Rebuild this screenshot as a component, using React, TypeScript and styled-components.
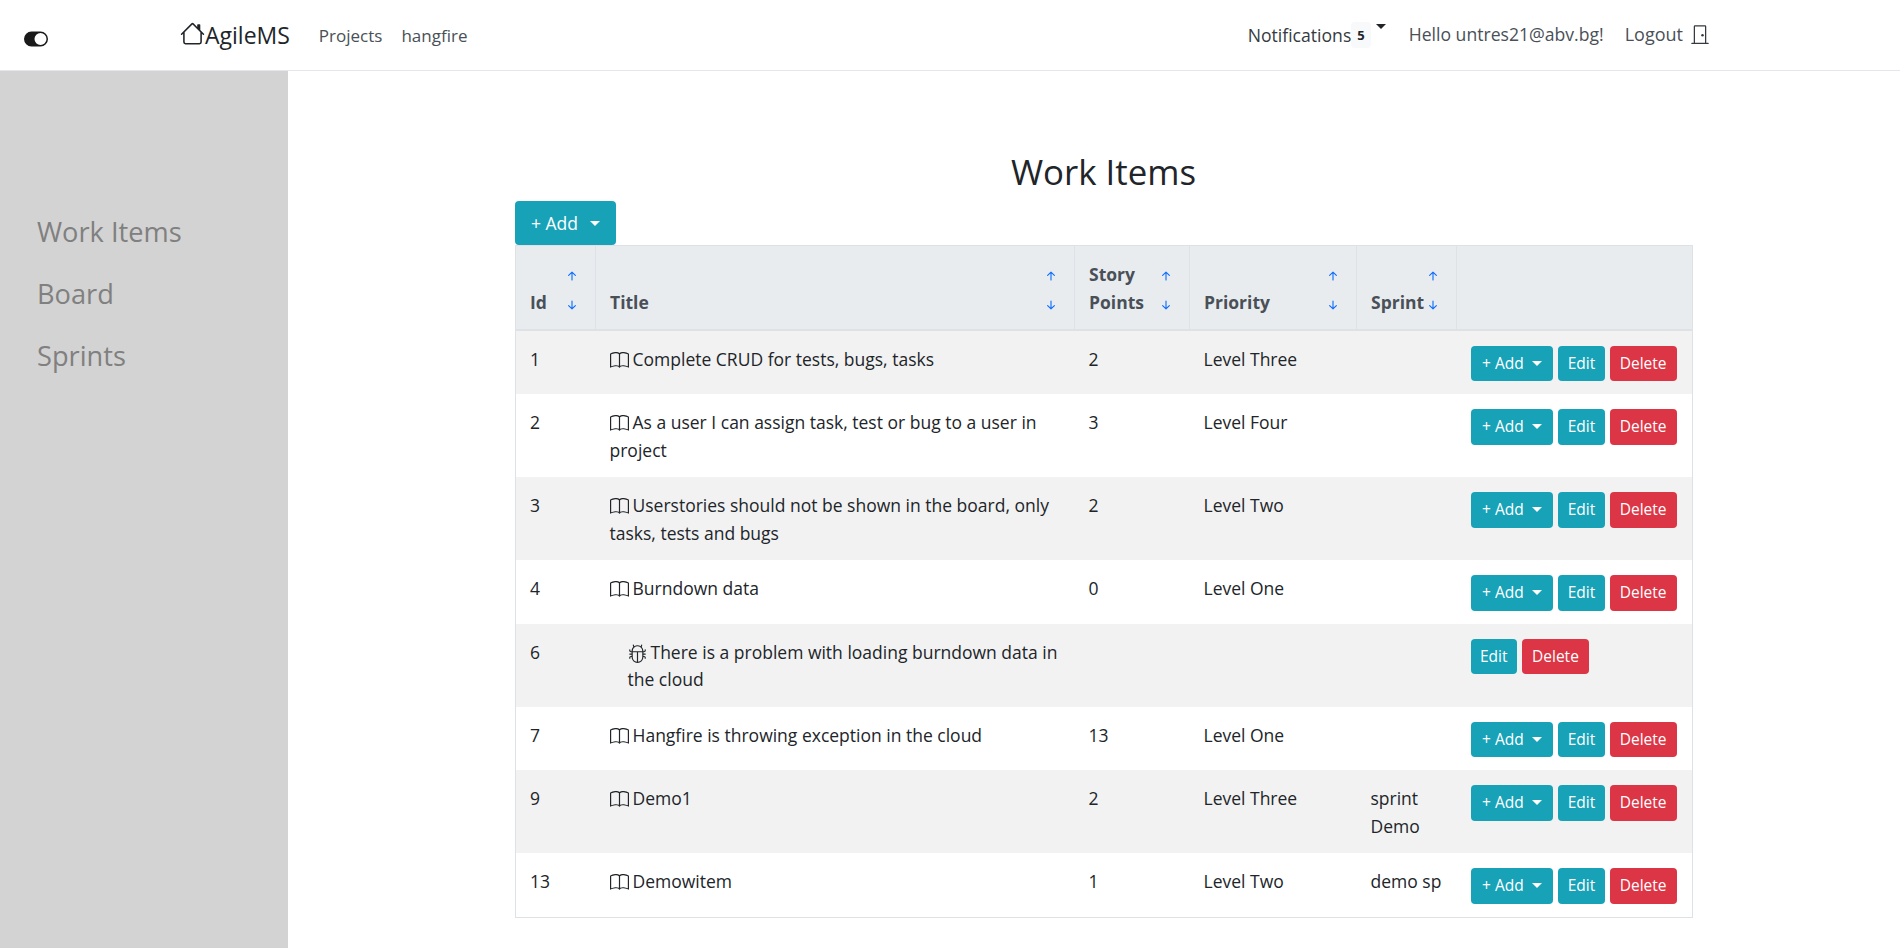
import { createGlobalStyle, styled } from 'styled-components';
import { BsArrowDownShort, BsArrowUpShort, BsBook, BsBug, BsDoorClosed, BsHouse, BsToggleOn } from 'react-icons/bs';

const GlobalStyle = createGlobalStyle`
	* { box-sizing: border-box; }
	html, body { margin: 0; height: 100%; }
	body {
		font-family: "Open Sans", "Liberation Sans", sans-serif;
		font-size: 17.5px;
		line-height: 27px;
		color: #212529;
		background: #fff;
	}
`;

const Page = styled.div`
	display: flex;
	flex-direction: column;
	height: 948px;
	overflow: hidden;
`;

const Navbar = styled.header`
	display: flex;
	align-items: center;
	height: 71px;
	flex-shrink: 0;
	padding: 0 0 0 24px;
	border-bottom: 1px solid #e5e5ee;
	color: #495057;
	font-size: 17px;
`;

const ThemeToggle = styled.span`
	display: flex;
	width: 24px;
	margin: 8px 132px 0 0;
	font-size: 24px;
	color: #1a1a1a;
`;

const Brand = styled.a`
	display: flex;
	align-items: center;
	font-size: 23px;
	color: #212529;
	margin-right: 29px;
	svg { font-size: 25px; margin-top: -4px; }
`;

const NavLink = styled.a`
	margin-right: 19px;
`;

const NavRight = styled.div`
	display: flex;
	align-items: center;
	margin-left: auto;
	margin-right: 190px;
	font-size: 17.6px;
`;

const Notifications = styled.span`
	display: flex;
	align-items: center;
	color: #343a40;
`;

const Badge = styled.span`
	align-self: flex-start;
	padding: 0 6px;
	border-radius: 4px;
	background: #f8f9fa;
	font-size: 13px;
	line-height: 26px;
	font-weight: 700;
	color: #212529;
`;

const Caret = styled.span`
	align-self: flex-start;
	margin: 2px 0 0 5px;
	border-top: 5px solid #212529;
	border-left: 5px solid transparent;
	border-right: 5px solid transparent;
`;

const Hello = styled.span`
	margin: -2px 0 0 23px;
`;

const Logout = styled.a`
	display: flex;
	align-items: center;
	margin: -2px 0 0 21px;
	font-size: 18px;
	svg { font-size: 20px; margin-left: 7px; color: #343a40; }
`;

const Body = styled.div`
	display: flex;
	flex: 1;
	min-height: 0;
`;

const Sidebar = styled.nav`
	display: flex;
	flex-direction: column;
	gap: 21px;
	width: 288px;
	flex-shrink: 0;
	padding: 140px 0 0 37px;
	background: #d3d3d3;
	color: #808080;
	font-size: 27.2px;
	line-height: 41px;
`;

const Main = styled.main`
	flex: 1;
	min-width: 0;
	padding: 78px 208px 0 227px;
`;

const Title = styled.h1`
	margin: 0 0 6px;
	font-size: 34.8px;
	line-height: 46px;
	font-weight: 400;
	text-align: center;
`;

const AddButton = styled.button<{ $small?: boolean }>`
	display: inline-flex;
	align-items: center;
	height: ${p => (p.$small ? '35.5px' : '44px')};
	padding: 0 ${p => (p.$small ? '11.5px' : '16px')};
	border: 0;
	border-radius: 4px;
	background: #17a2b8;
	color: #fff;
	font: inherit;
	font-size: ${p => (p.$small ? '15.5px' : '17.5px')};
	&::after {
		content: '';
		margin-left: ${p => (p.$small ? '8px' : '12px')};
		border-top: 5px solid #fff;
		border-left: 5px solid transparent;
		border-right: 5px solid transparent;
	}
`;

const ActionButton = styled.button<{ $danger?: boolean }>`
	height: 35.5px;
	padding: 0 ${p => (p.$danger ? '10px' : '9.5px')};
	border: 0;
	border-radius: 4px;
	background: ${p => (p.$danger ? '#dc3545' : '#17a2b8')};
	color: #fff;
	font: inherit;
	font-size: 15.5px;
`;

const Table = styled.table`
	display: table;
	width: 1177px;
	table-layout: fixed;
	border-collapse: collapse;
	border: 1px solid #dee2e6;
`;

const HeadCell = styled.th<{ $width: number }>`
	width: ${p => p.$width}px;
	height: 84px;
	padding: 0 14px 13px;
	border-right: 1px solid #dee2e6;
	border-bottom: 2px solid #dee2e6;
	background: #e9ecef;
	color: #495057;
	font-weight: 700;
	line-height: 28px;
	text-align: left;
	vertical-align: bottom;
	&:last-child { border-right: 0; }
`;

const HeadInner = styled.div`
	display: flex;
	align-items: flex-end;
	justify-content: space-between;
`;

const SortArrows = styled.span`
	display: flex;
	flex-direction: column;
	gap: 11px;
	margin-bottom: 2px;
	color: #0d6efd;
	font-size: 18px;
	svg { display: block; }
`;

const Row = styled.tr`
	&:nth-child(odd) { background: #f2f2f2; }
	&:last-child { border-bottom: 1px solid #dee2e6; }
`;

const Cell = styled.td`
	padding: 15px 14px 13px;
	line-height: 27.5px;
	vertical-align: top;
`;

const TitleCell = styled(Cell)<{ $nested?: boolean }>`
	padding-left: ${p => (p.$nested ? '32px' : '14px')};
	svg { font-size: 19px; vertical-align: -4px; margin-right: 4px; }
`;

const ActionCell = styled(Cell)`
	padding: 15px 14px 13px;
`;

const Actions = styled.div`
	display: flex;
	gap: 5px;
`;

type WorkItem = {
	id: number;
	title: string;
	points?: number;
	priority?: string;
	sprint?: string;
	bug?: boolean;
};

const items: WorkItem[] = [
	{ id: 1, title: 'Complete CRUD for tests, bugs, tasks', points: 2, priority: 'Level Three' },
	{ id: 2, title: 'As a user I can assign task, test or bug to a user in project', points: 3, priority: 'Level Four' },
	{ id: 3, title: 'Userstories should not be shown in the board, only tasks, tests and bugs', points: 2, priority: 'Level Two' },
	{ id: 4, title: 'Burndown data', points: 0, priority: 'Level One' },
	{ id: 6, title: 'There is a problem with loading burndown data in the cloud', bug: true },
	{ id: 7, title: 'Hangfire is throwing exception in the cloud', points: 13, priority: 'Level One' },
	{ id: 9, title: 'Demo1', points: 2, priority: 'Level Three', sprint: 'sprint Demo' },
	{ id: 13, title: 'Demowitem', points: 1, priority: 'Level Two', sprint: 'demo sp' },
];

const columns = [
	{ label: 'Id', width: 80 },
	{ label: 'Title', width: 479 },
	{ label: 'Story Points', width: 115 },
	{ label: 'Priority', width: 167 },
	{ label: 'Sprint', width: 100 },
];

const App = () => (
	<Page>
		<GlobalStyle />
		<Navbar>
			<ThemeToggle><BsToggleOn /></ThemeToggle>
			<Brand><BsHouse />AgileMS</Brand>
			<NavLink>Projects</NavLink>
			<NavLink>hangfire</NavLink>
			<NavRight>
				<Notifications>Notifications<Badge>5</Badge><Caret /></Notifications>
				<Hello>Hello untres21@abv.bg!</Hello>
				<Logout>Logout<BsDoorClosed /></Logout>
			</NavRight>
		</Navbar>
		<Body>
			<Sidebar>
				<a>Work Items</a>
				<a>Board</a>
				<a>Sprints</a>
			</Sidebar>
			<Main>
				<Title>Work Items</Title>
				<AddButton>+ Add</AddButton>
				<Table>
					<thead>
						<tr>
							{columns.map(col => (
								<HeadCell key={col.label} $width={col.width}>
									<HeadInner>
										<span>{col.label}</span>
										<SortArrows><BsArrowUpShort /><BsArrowDownShort /></SortArrows>
									</HeadInner>
								</HeadCell>
							))}
							<HeadCell $width={236} />
						</tr>
					</thead>
					<tbody>
						{items.map(item => (
							<Row key={item.id}>
								<Cell>{item.id}</Cell>
								<TitleCell $nested={item.bug}>
									{item.bug ? <BsBug /> : <BsBook />}
									{item.title}
								</TitleCell>
								<Cell>{item.points}</Cell>
								<Cell>{item.priority}</Cell>
								<Cell>{item.sprint}</Cell>
								<ActionCell>
									<Actions>
										{!item.bug && <AddButton $small>+ Add</AddButton>}
										<ActionButton>Edit</ActionButton>
										<ActionButton $danger>Delete</ActionButton>
									</Actions>
								</ActionCell>
							</Row>
						))}
					</tbody>
				</Table>
			</Main>
		</Body>
	</Page>
);

export default App;
